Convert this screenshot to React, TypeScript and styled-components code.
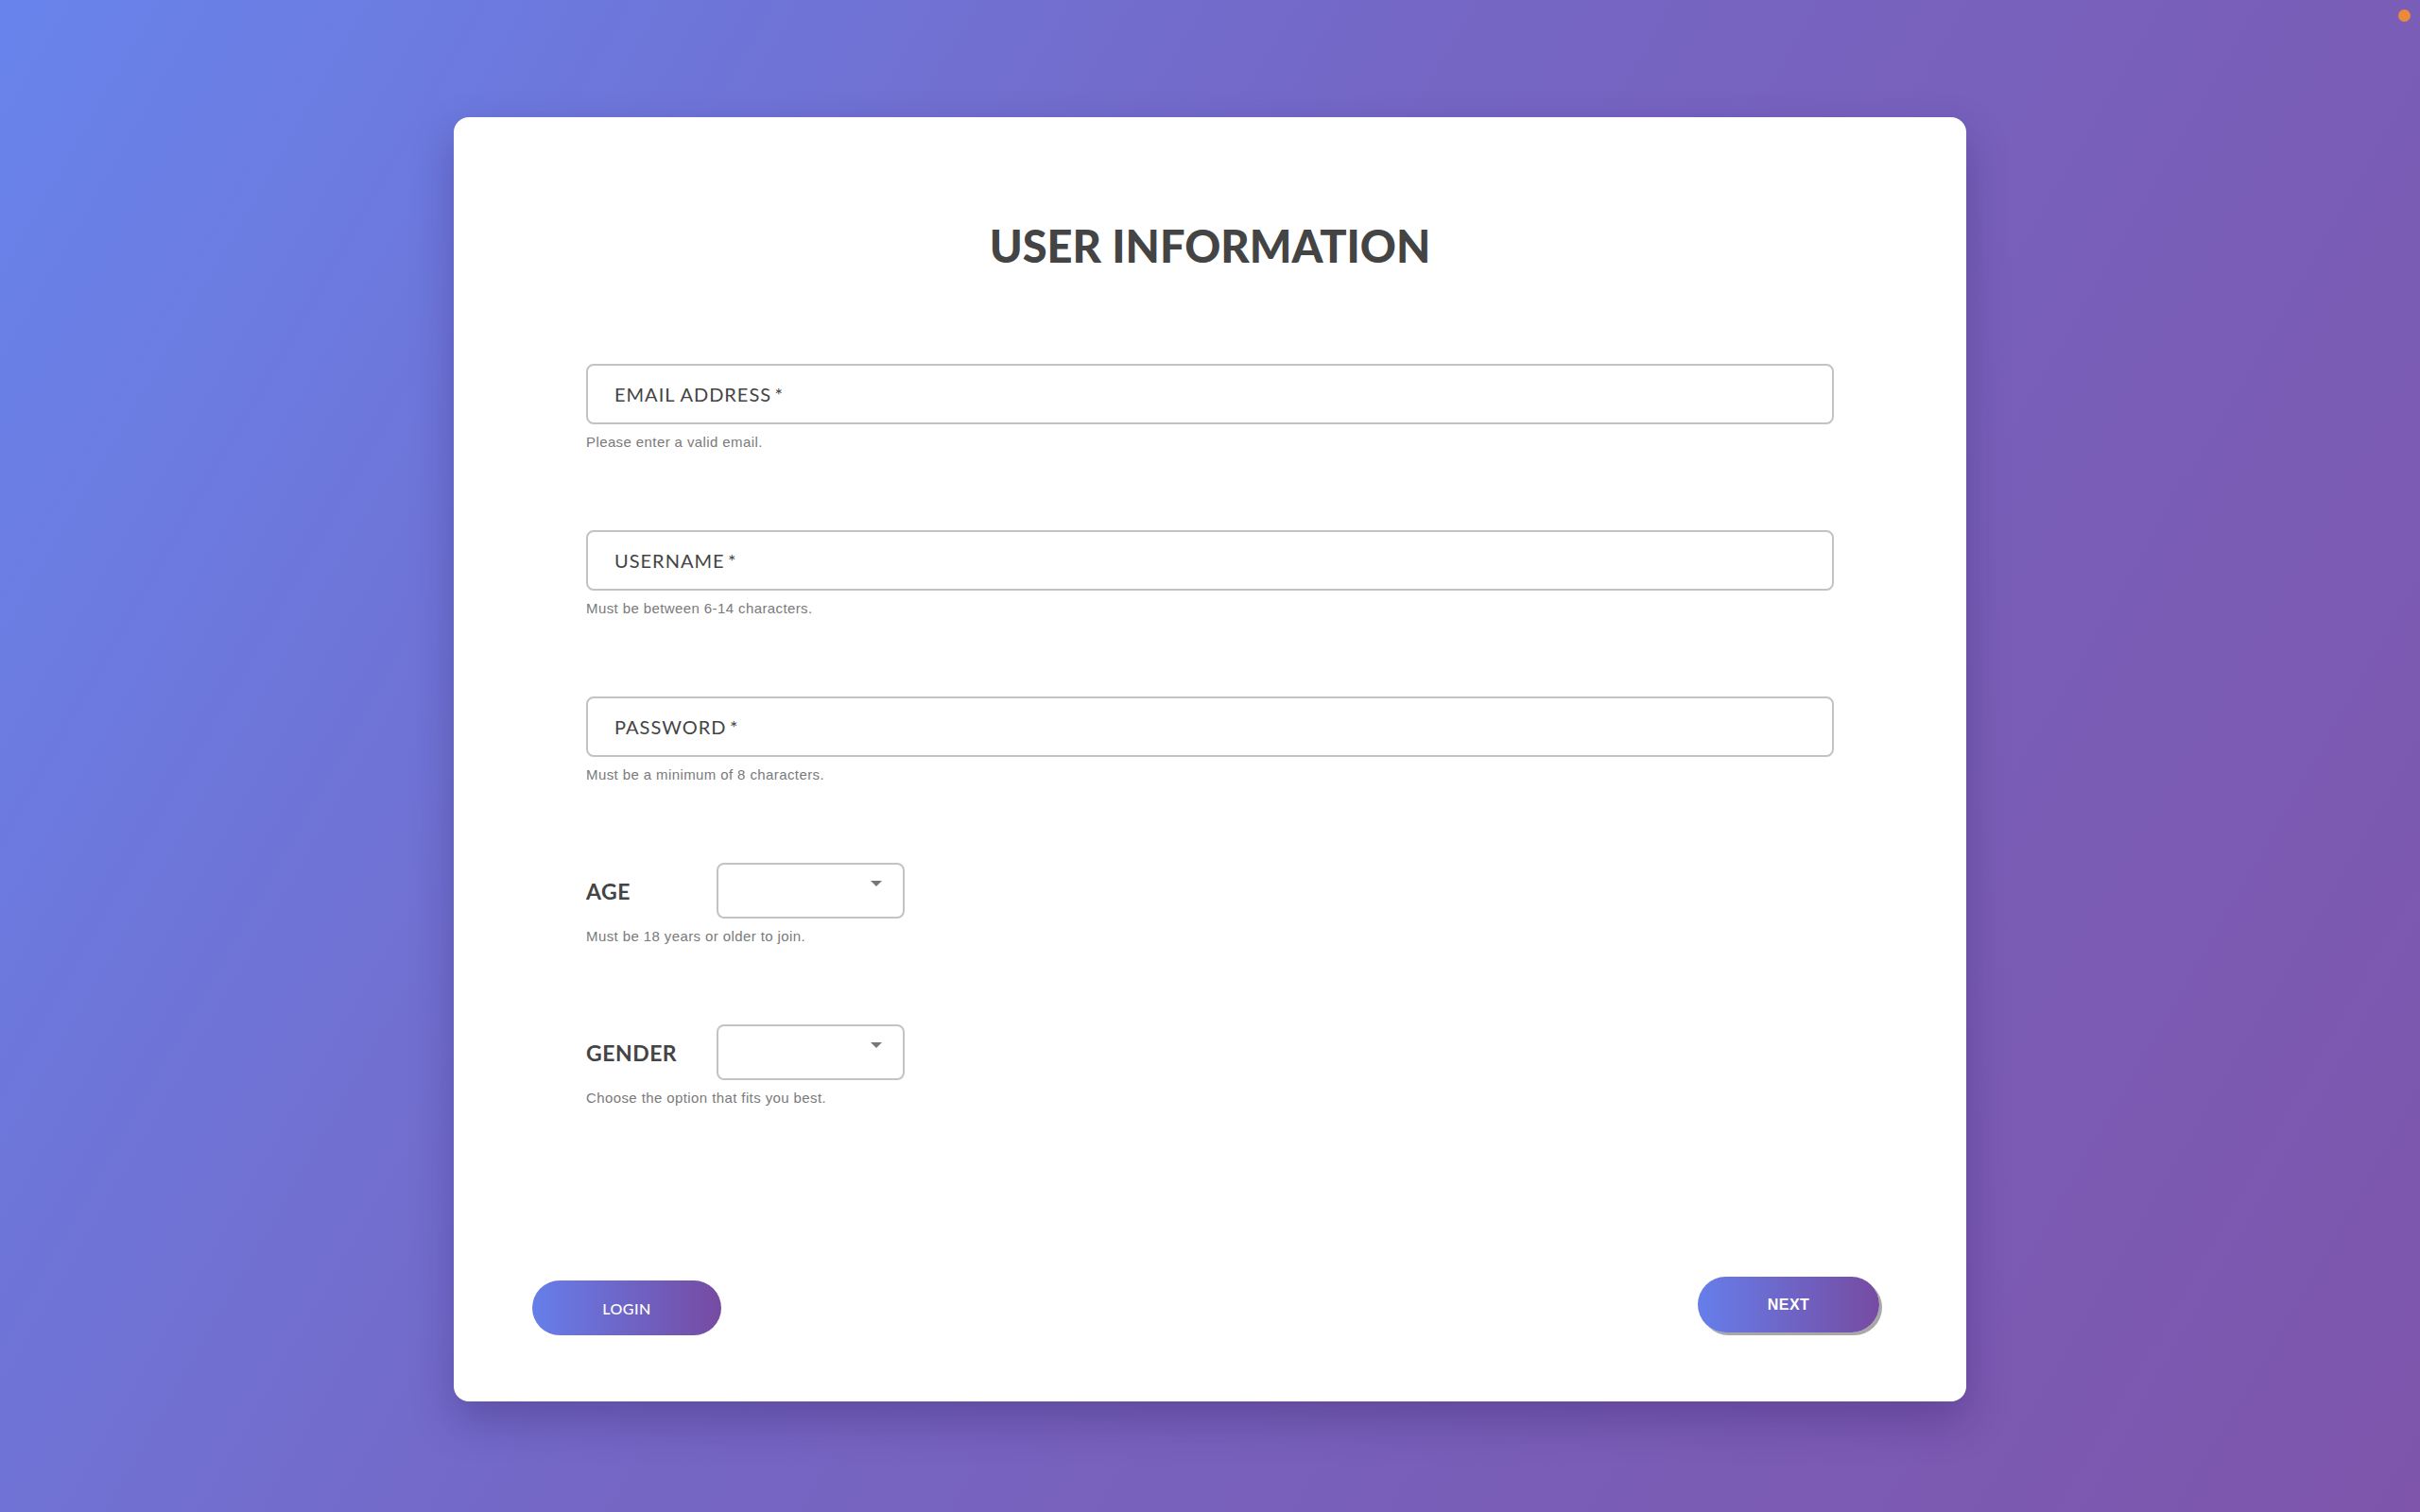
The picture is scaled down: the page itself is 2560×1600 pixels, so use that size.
import React from "react";
import styled, { createGlobalStyle } from "styled-components";

const GlobalStyle = createGlobalStyle`
  html, body, #root { margin: 0; padding: 0; height: 100%; }
  body {
    font-family: "Lato", "Liberation Sans", sans-serif;
    background: linear-gradient(120deg, #6884ec 0%, #7566c4 45%, #7e55ab 100%);
    min-height: 100vh;
  }
  * { box-sizing: border-box; }
`;

const Page = styled.div`
  min-height: 100vh;
  display: flex;
  justify-content: center;
  padding-top: 124px;
`;

const StatusDot = styled.span`
  position: fixed;
  top: 10px;
  right: 10px;
  width: 13px;
  height: 13px;
  border-radius: 50%;
  background: #e98b3a;
`;

const Card = styled.div`
  width: 1600px;
  height: 1359px;
  background: #fff;
  border-radius: 16px;
  box-shadow: 0 20px 45px rgba(40, 20, 90, 0.3);
  display: flex;
  flex-direction: column;
  padding: 108px 0 70px 0;
`;

const Title = styled.h1`
  margin: 0;
  text-align: center;
  font-family: "Lato", sans-serif;
  font-weight: 900;
  font-size: 47px;
  line-height: 56px;
  letter-spacing: 0;
  color: #444;
`;

const Form = styled.div`
  display: flex;
  flex-direction: column;
  gap: 85px;
  padding: 0 140px;
  margin-top: 97px;
`;

const Field = styled.div`
  display: flex;
  flex-direction: column;
  gap: 10px;
`;

const TextBox = styled.div`
  height: 64px;
  border: 2px solid #c3c3c3;
  border-radius: 8px;
  display: flex;
  align-items: center;
  padding: 0 26px;
`;

const Input = styled.input`
  border: none;
  outline: none;
  flex: 1;
  height: 100%;
  font-family: "Lato", sans-serif;
  font-size: 20px;
  letter-spacing: 1px;
  color: #444;
  background: transparent;
  &::placeholder { color: #444; opacity: 1; }
`;

const Helper = styled.div`
  font-family: "Liberation Sans", Arial, sans-serif;
  font-size: 15px;
  line-height: 17px;
  letter-spacing: 0.4px;
  color: #7a7a7a;
`;

const SelectRow = styled.div`
  display: flex;
  align-items: center;
`;

const SelectLabel = styled.label`
  width: 138px;
  font-family: "Lato", sans-serif;
  font-weight: 700;
  font-size: 23px;
  letter-spacing: 0.5px;
  color: #444;
`;

const SelectWrap = styled.div`
  position: relative;
  width: 199px;
  height: 59px;
  &::after {
    content: "";
    position: absolute;
    top: 19px;
    right: 24px;
    border-left: 6px solid transparent;
    border-right: 6px solid transparent;
    border-top: 6px solid #777;
    pointer-events: none;
  }
`;

const Select = styled.select`
  appearance: none;
  width: 100%;
  height: 100%;
  border: 2px solid #c3c3c3;
  border-radius: 8px;
  background: #fff;
  outline: none;
  font-family: "Lato", sans-serif;
  font-size: 16px;
  padding: 0 14px;
`;

const Footer = styled.div`
  margin-top: auto;
  display: flex;
  justify-content: space-between;
  align-items: flex-end;
  padding: 0 92px 0 83px;
`;

const PillButton = styled.button<{ $raised?: boolean }>`
  width: ${(p) => (p.$raised ? "192px" : "200px")};
  height: ${(p) => (p.$raised ? "59px" : "58px")};
  margin-bottom: ${(p) => (p.$raised ? "3px" : "0")};
  border: none;
  border-radius: 30px;
  background: linear-gradient(90deg, #667eea 0%, #764ba2 100%);
  color: #fff;
  font-family: ${(p) => (p.$raised ? '"Liberation Sans", Arial, sans-serif' : '"Lato", sans-serif')};
  font-weight: ${(p) => (p.$raised ? 700 : 500)};
  font-size: 16px;
  letter-spacing: 0.5px;
  box-shadow: ${(p) => (p.$raised ? "3px 3px 0 #a8a8a8" : "none")};
  cursor: pointer;
`;

const textFields = [
  { label: "EMAIL ADDRESS\u2009*", help: "Please enter a valid email.", type: "email" },
  { label: "USERNAME\u2009*", help: "Must be between 6-14 characters.", type: "text" },
  { label: "PASSWORD\u2009*", help: "Must be a minimum of 8 characters.", type: "password" },
];

const selectFields = [
  { label: "AGE", help: "Must be 18 years or older to join." },
  { label: "GENDER", help: "Choose the option that fits you best." },
];

export default function App() {
  return (
    <>
      <GlobalStyle />
      <StatusDot />
      <Page>
        <Card>
          <Title>USER INFORMATION</Title>
          <Form>
            {textFields.map((f) => (
              <Field key={f.label}>
                <TextBox>
                  <Input type={f.type} placeholder={f.label} />
                </TextBox>
                <Helper>{f.help}</Helper>
              </Field>
            ))}
            {selectFields.map((f) => (
              <Field key={f.label}>
                <SelectRow>
                  <SelectLabel>{f.label}</SelectLabel>
                  <SelectWrap>
                    <Select defaultValue="">
                      <option value=""></option>
                    </Select>
                  </SelectWrap>
                </SelectRow>
                <Helper>{f.help}</Helper>
              </Field>
            ))}
          </Form>
          <Footer>
            <PillButton>LOGIN</PillButton>
            <PillButton $raised>NEXT</PillButton>
          </Footer>
        </Card>
      </Page>
    </>
  );
}
